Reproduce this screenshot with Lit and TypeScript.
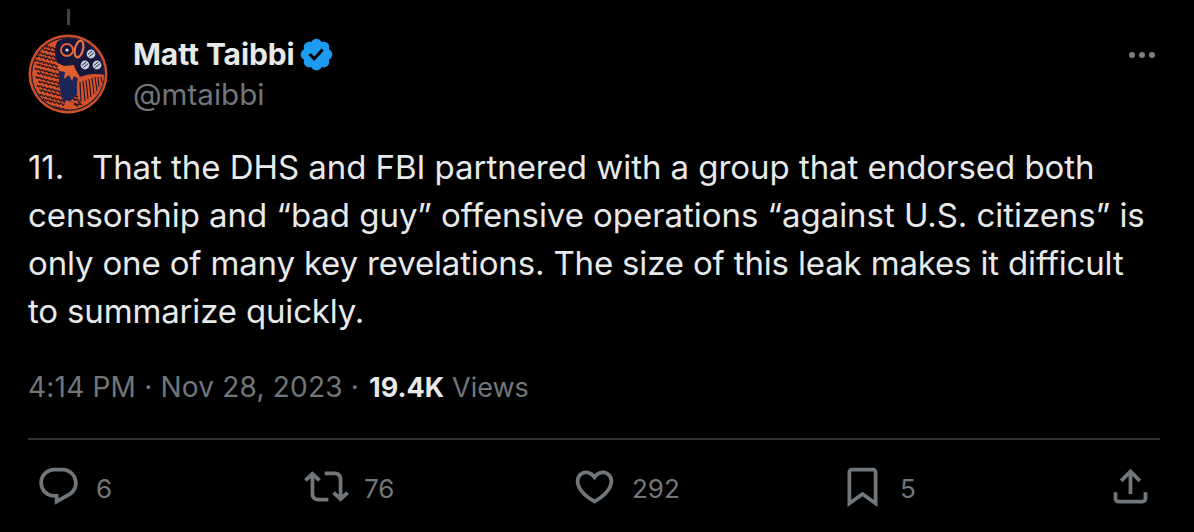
import { LitElement, html, css, svg } from "lit";
import { customElement } from "lit/decorators.js";

const P = {
  reply: "M1.751 10c0-4.42 3.584-8 8.005-8h4.366c4.49 0 8.129 3.64 8.129 8.13 0 2.96-1.607 5.68-4.196 7.11l-8.054 4.46v-3.69h-.067c-4.49.1-8.183-3.51-8.183-8.01zm8.005-6c-3.317 0-6.005 2.69-6.005 6 0 3.37 2.77 6.08 6.138 6.01l.351-.01h1.761v2.3l5.087-2.81c1.951-1.08 3.163-3.13 3.163-5.36 0-3.39-2.744-6.13-6.129-6.13H9.756z",
  retweet: "M4.5 3.88l4.432 4.14-1.364 1.46L5.5 7.55V16c0 1.1.896 2 2 2H13v2H7.5c-2.209 0-4-1.79-4-4V7.55L1.432 9.48.068 8.02 4.5 3.88zM16.5 6H11V4h5.5c2.209 0 4 1.79 4 4v8.45l2.068-1.93 1.364 1.46-4.432 4.14-4.432-4.14 1.364-1.46 2.068 1.93V8c0-1.1-.896-2-2-2z",
  like: "M16.697 5.5c-1.222-.06-2.679.51-3.89 2.16l-.805 1.09-.806-1.09C9.984 6.01 8.526 5.44 7.304 5.5c-1.243.07-2.349.78-2.91 1.91-.552 1.12-.633 2.78.479 4.82 1.074 1.97 3.257 4.27 7.129 6.61 3.87-2.34 6.052-4.64 7.126-6.61 1.111-2.04 1.03-3.7.477-4.82-.561-1.13-1.666-1.84-2.908-1.91zm4.187 7.69c-1.351 2.48-4.001 5.12-8.379 7.67l-.503.3-.504-.3c-4.379-2.55-7.029-5.19-8.382-7.67-1.36-2.5-1.41-4.86-.514-6.67.887-1.79 2.647-2.91 4.601-3.01 1.651-.09 3.368.56 4.798 2.01 1.429-1.45 3.146-2.1 4.796-2.01 1.954.1 3.714 1.22 4.601 3.01.896 1.81.846 4.17-.514 6.67z",
  bookmark: "M4 4.5C4 3.12 5.119 2 6.5 2h11C18.881 2 20 3.12 20 4.5v18.44l-8-5.71-8 5.71V4.5zM6.5 4c-.276 0-.5.22-.5.5v14.56l6-4.29 6 4.29V4.5c0-.28-.224-.5-.5-.5h-11z",
  share: "M12 2.59l5.7 5.7-1.41 1.42L13 6.41V16h-2V6.41l-3.3 3.3-1.41-1.42L12 2.59zM21 15l-.02 3.51c0 1.38-1.12 2.49-2.5 2.49H5.5C4.11 21 3 19.88 3 18.5V15h2v3.5c0 .28.22.5.5.5h12.98c.28 0 .5-.22.5-.5L19 15h2z",
};

const icon = (d: string) => html`<svg class="icon" viewBox="0 0 24 24"><path d=${d} fill="currentColor"></path></svg>`;

const ball = (x: number, y: number, r: number) => svg`
  <circle cx=${x} cy=${y} r=${r} fill="#c9d0dc"></circle>
  <path d="M${x - r * 0.7} ${y + r * 0.1}L${x + r * 0.3} ${y - r * 0.7}M${x - r * 0.4} ${y + r * 0.6}L${x + r * 0.7} ${y - r * 0.3}" stroke="#1c2547" stroke-width="1"></path>`;

// Rows of fish scales over the body, drawn in the ink colour on the orange ground.
const scaleMarks: unknown[] = [];
for (let row = 0; row < 17; row++) {
  for (let col = 0; col < 10; col++) {
    const x = 4 + col * 4.2 + (row % 2) * 2.1 + row * 0.5;
    const y = 8 + row * 4.3 + col * 1.1;
    if (x > 33 && y < 60) continue;
    scaleMarks.push(svg`<path d="M${x} ${y}q1.6 3.4 3.6 .4" fill="none" stroke="#24121f" stroke-width="1.5"></path>`);
  }
}

const avatar = svg`<svg class="avatar" viewBox="0 0 80 80">
  <defs><clipPath id="disc"><circle cx="40" cy="40" r="36"></circle></clipPath></defs>
  <circle cx="40" cy="40" r="39.5" fill="#cf4e2a"></circle>
  <circle cx="40" cy="40" r="37" fill="#1a1b33"></circle>
  <g clip-path="url(#disc)">
    <circle cx="40" cy="40" r="36" fill="#d65229"></circle>
    ${scaleMarks}
    <path d="M42 3L80 3L80 44C72 40 62 42 54 46L48 36L30 30C26 22 26 12 30 7C34 5 38 4 42 3Z" fill="#15163a"></path>
    <path d="M31 36C36 34 44 36 50 44C54 52 50 62 42 67C38 69 36 70 35 68C32 58 30 46 31 36Z" fill="#1c2557"></path>
    <path d="M29 29L36 32L46 31L48 37L51 45L46 42L44 47L41 41L36 45L37 38L31 37Z" fill="#e2602f"></path>
    <path d="M50 44C58 40 68 39 77 41C76 56 66 68 54 72C50 66 47 54 50 44Z" fill="#d65229"></path>
    <path d="M52 48L53 68M55 47L57 67M58 46L60 65M61 45L63 63M64 44L66 60M67 43L69 57M70 43L71 53M73 43L74 49" stroke="#1a1430" stroke-width="1.1"></path>
    <path d="M38 66L52 72L48 76L36 72Z" fill="#d65229"></path>
    <path d="M46 70l4 2M50 68l4 3" stroke="#1a1430" stroke-width="1.4"></path>
  </g>
  <circle cx="39" cy="16" r="6" fill="none" stroke="#e0613a" stroke-width="2"></circle>
  <circle cx="39" cy="16" r="1.6" fill="#d8dbe2"></circle>
  <ellipse cx="51" cy="15" rx="4" ry="8.5" transform="rotate(14 51 15)" fill="none" stroke="#ec7344" stroke-width="2.2"></ellipse>
  ${ball(63, 20, 4.4)}${ball(57, 31, 4.4)}${ball(69, 31, 4.4)}
</svg>`;

@customElement("app-root")
export class AppRoot extends LitElement {
  static styles = css`
    :host {
      display: block;
      width: 1194px;
      height: 532px;
      background: #000;
      color: #e7e9ea;
      font-family: Inter, "Liberation Sans", sans-serif;
      overflow: hidden;
    }
    .page { display: flex; flex-direction: column; padding: 9px 34px 0 28px; height: 532px; box-sizing: border-box; }
    .stub { width: 3px; height: 16px; background: #3f4245; margin-left: 39px; }
    .head { display: flex; align-items: center; margin-top: 9px; height: 80px; }
    .avatar { width: 80px; height: 80px; flex: none; }
    .who { margin-left: 25px; flex: 1; display: flex; flex-direction: column; }
    .name { display: flex; align-items: center; font-size: 30px; font-weight: 700; line-height: 39px; letter-spacing: -0.1px; margin-top: -2px; }
    .badge { width: 37px; height: 37px; margin-left: 3px; }
    .handle { font-size: 29.6px; line-height: 36px; color: #71767b; margin-top: 2px; }
    .more { display: flex; gap: 4px; align-self: flex-start; margin: 18px 5px 0 0; }
    .more i { width: 6px; height: 6px; border-radius: 50%; background: #7b7f84; }
    .body { margin-top: 29px; font-size: 33px; line-height: 48px; white-space: pre; letter-spacing: -0.05px; }
    .tight { letter-spacing: -0.16px; }
    .meta { margin-top: 32px; font-size: 28px; line-height: 40px; color: #71767b; white-space: pre; }
    .date { letter-spacing: 0.2px; }
    .meta b { color: #e7e9ea; font-weight: 700; font-size: 27px; margin-left: 2px; }
    .views { font-size: 27px; }
    .rule { height: 2px; background: #2f3336; margin-top: 30px; }
    .stats { display: grid; grid-template-columns: repeat(4, 268px) 45px; margin: 24px 0 0 8px; color: #71767b; }
    .stat { display: flex; align-items: center; gap: 15px; font-size: 26px; height: 45px; }
    .stat span { padding-top: 3px; }
    .icon { width: 45px; height: 45px; flex: none; }
  `;

  render() {
    return html`<div class="page">
      <div class="stub"></div>
      <div class="head">
        ${avatar}
        <div class="who">
          <div class="name">Matt Taibbi<svg class="badge" viewBox="0 0 24 24"><path fill="#1d9bf0" d="M22.25 12c0-1.43-.88-2.67-2.19-3.34.46-1.39.2-2.9-.81-3.91s-2.52-1.27-3.91-.81c-.66-1.31-1.91-2.19-3.34-2.19s-2.67.88-3.33 2.19c-1.4-.46-2.91-.2-3.92.81s-1.26 2.52-.8 3.91c-1.31.67-2.2 1.91-2.2 3.34s.89 2.67 2.2 3.34c-.46 1.39-.21 2.9.8 3.91s2.52 1.26 3.91.81c.67 1.31 1.91 2.19 3.34 2.19s2.68-.88 3.34-2.19c1.39.45 2.9.2 3.91-.81s1.27-2.52.81-3.91c1.31-.67 2.19-1.91 2.19-3.34zm-11.71 4.2L6.8 12.46l1.41-1.42 2.26 2.26 4.8-5.23 1.47 1.36-6.2 6.77z"></path></svg></div>
          <div class="handle">@mtaibbi</div>
        </div>
        <div class="more"><i></i><i></i><i></i></div>
      </div>
      <div class="body">11.   That the DHS and FBI partnered with a group that endorsed both
censorship and “bad guy” offensive operations “against U.S. citizens” is
<span class="tight">only one of many key revelations. The size of this leak makes it difficult</span>
<span class="tight">to summarize quickly.</span></div>
      <div class="meta"><span class="date">4:14 PM · Nov 28, 2023 · </span><b>19.4K</b> <span class="views">Views</span></div>
      <div class="rule"></div>
      <div class="stats">
        <div class="stat">${icon(P.reply)}<span>6</span></div>
        <div class="stat">${icon(P.retweet)}<span>76</span></div>
        <div class="stat">${icon(P.like)}<span>292</span></div>
        <div class="stat">${icon(P.bookmark)}<span>5</span></div>
        <div class="stat">${icon(P.share)}</div>
      </div>
    </div>`;
  }
}
